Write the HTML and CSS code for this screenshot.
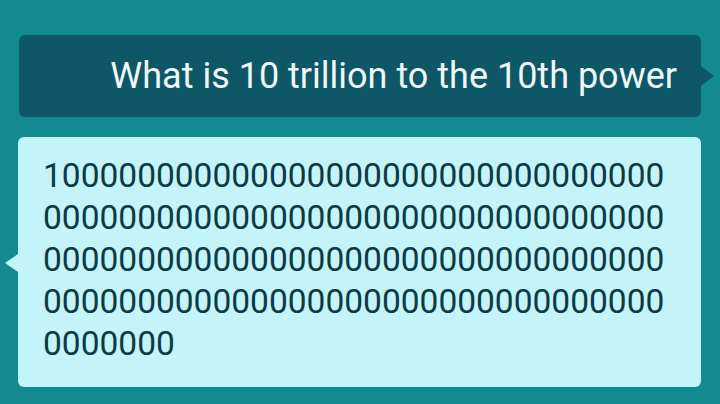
FILE: index.html
```html
<!DOCTYPE html>
<html lang="en">
<head>
    <meta charset="UTF-8">
    <meta name="viewport" content="width=device-width, initial-scale=1.0">
    <title>Ask</title>
    <link rel="stylesheet" href="styles.css">
</head>
<body>
    <div class="chat">
        <div class="bubble question">
            <p>What is 10 trillion to the 10th power</p>
        </div>
        <div class="bubble answer">
            <p>100000000000000000000000000000000<br>000000000000000000000000000000000<br>000000000000000000000000000000000<br>000000000000000000000000000000000<br>0000000</p>
        </div>
    </div>
</body>
</html>
```

FILE: styles.css
```css
body {
    margin: 0;
    padding: 0;
    background-color: #128a90;
    font-family: Roboto, "Noto Sans", sans-serif;
}
.chat {
    display: flex;
    flex-direction: column;
    gap: 20px;
    padding: 35px 19px 0 18px;
}
.bubble {
    position: relative;
    border-radius: 6px;
}
.bubble p {
    margin: 0;
}
.bubble::after {
    content: "";
    position: absolute;
    width: 0;
    height: 0;
    border-style: solid;
}
.question {
    margin-left: 1px;
    height: 82px;
    display: flex;
    align-items: center;
    justify-content: flex-end;
    padding: 0 24px;
    background-color: #0d5766;
    color: #eef8f8;
    font-size: 36px;
}
.question::after {
    right: -13px;
    top: 31px;
    border-width: 10px 0 10px 13px;
    border-color: transparent transparent transparent #0d5766;
}
.answer {
    padding: 18px 24px 22px 25px;
    background-color: #c3f4fa;
    color: #0e3a43;
    font-size: 33.5px;
    line-height: 42px;
}
.answer::after {
    left: -13px;
    top: 117px;
    border-width: 9px 13px 9px 0;
    border-color: transparent #c3f4fa transparent transparent;
}
```
